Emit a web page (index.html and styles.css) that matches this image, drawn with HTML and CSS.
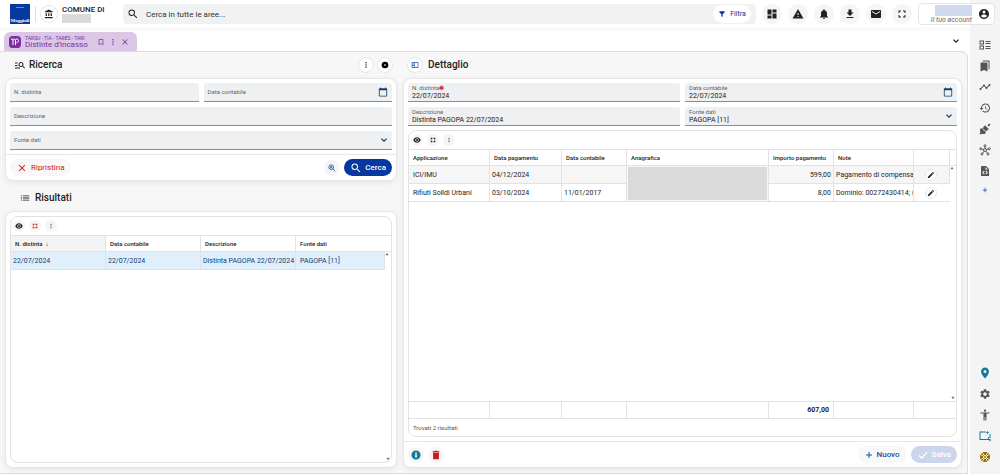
FILE: index.html
```html
<!DOCTYPE html>
<html lang="it">
<head>
  <meta charset="UTF-8">
  <meta name="viewport" content="width=device-width, initial-scale=1.0">
  <title>Distinte d'incasso</title>
  <link rel="stylesheet" href="styles.css">
</head>
<body>
  <!-- Icons -->
  <svg class="sprite" aria-hidden="true">
    <symbol id="i-search" viewBox="0 0 24 24"><path d="M15.5 14h-.79l-.28-.27A6.471 6.471 0 0 0 16 9.5 6.5 6.5 0 1 0 9.5 16c1.61 0 3.09-.59 4.23-1.57l.27.28v.79l5 4.99L20.49 19l-4.99-5zm-6 0C7.01 14 5 11.99 5 9.5S7.01 5 9.5 5 14 7.01 14 9.5 11.99 14 9.5 14z"/></symbol>
    <symbol id="i-zoom" viewBox="0 0 24 24"><g fill="none" stroke="currentColor" stroke-width="2.5"><circle cx="9.500" cy="9.500" r="7"/><path d="M14.500 14.500l7.500 7.500M6 9.500h7M9.500 6v7"/></g></symbol>
    <symbol id="i-more" viewBox="0 0 24 24"><circle cx="12" cy="5" r="2.300"/><circle cx="12" cy="12" r="2.300"/><circle cx="12" cy="19" r="2.300"/></symbol>
    <symbol id="i-bank" viewBox="0 0 24 24"><path d="M4 10v7h3v-7H4zm6 0v7h3v-7h-3zM2 22h19v-3H2v3zm14-12v7h3v-7h-3zm-4.500-9L2 6v2h19V6l-9.500-5z"/></symbol>
    <symbol id="i-dashboard" viewBox="0 0 24 24"><path d="M3 13h8V3H3v10zm0 8h8v-6H3v6zm10 0h8V11h-8v10zm0-18v6h8V3h-8z"/></symbol>
    <symbol id="i-warning" viewBox="0 0 24 24"><path d="M1 21h22L12 2 1 21zm12-3h-2v-2h2v2zm0-4h-2v-4h2v4z"/></symbol>
    <symbol id="i-bell" viewBox="0 0 24 24"><path d="M12 22c1.100 0 2-.9 2-2h-4c0 1.100.89 2 2 2zm6-6v-5c0-3.070-1.640-5.640-4.500-6.320V4c0-.83-.67-1.500-1.500-1.500s-1.500.67-1.500 1.500v.68C7.630 5.360 6 7.920 6 11v5l-2 2v1h16v-1l-2-2z"/></symbol>
    <symbol id="i-download" viewBox="0 0 24 24"><path d="M19 9h-4V3H9v6H5l7 7 7-7zM5 18v2h14v-2H5z"/></symbol>
    <symbol id="i-mail" viewBox="0 0 24 24"><path d="M20 4H4c-1.100 0-2 .9-2 2v12c0 1.100.9 2 2 2h16c1.100 0 2-.9 2-2V6c0-1.100-.9-2-2-2zm0 4l-8 5-8-5V6l8 5 8-5v2z"/></symbol>
    <symbol id="i-full" viewBox="0 0 24 24"><path d="M7 14H5v5h5v-2H7v-3zm-2-4h2V7h3V5H5v5zm12 7h-3v2h5v-5h-2v3zM14 5v2h3v3h2V5h-5z"/></symbol>
    <symbol id="i-corners" viewBox="0 0 24 24"><path d="M3 14h4v3h3v4H3zM3 3h7v4H7v3H3zM17 14h4v7h-7v-4h3zM14 3h7v7h-4V7h-3z"/></symbol>
    <symbol id="i-account" viewBox="0 0 24 24"><path d="M12 2C6.480 2 2 6.480 2 12s4.480 10 10 10 10-4.480 10-10S17.520 2 12 2zm0 3c1.660 0 3 1.340 3 3s-1.340 3-3 3-3-1.340-3-3 1.340-3 3-3zm0 14.200c-2.500 0-4.710-1.280-6-3.220.03-1.990 4-3.080 6-3.080 1.990 0 5.970 1.090 6 3.080-1.290 1.940-3.500 3.220-6 3.220z"/></symbol>
    <symbol id="i-chevron" viewBox="0 0 24 24"><path d="M18.500 6.500L12 13 5.500 6.500 3 9l9 9 9-9z"/></symbol>
    <symbol id="i-filter" viewBox="0 0 24 24"><path d="M4 4h16v3l-6 6v8l-4-2v-6L4 7z"/></symbol>
    <symbol id="i-manage" viewBox="0 0 24 24"><path d="M7 9H2V7h5v2zm0 3H2v2h5v-2zm13.590 7l-3.830-3.830c-.8.52-1.740.83-2.760.83-2.760 0-5-2.240-5-5s2.240-5 5-5 5 2.240 5 5c0 1.020-.31 1.960-.83 2.750L22 17.590 20.590 19zM17 11c0-1.650-1.350-3-3-3s-3 1.350-3 3 1.350 3 3 3 3-1.350 3-3zM2 19h10v-2H2v2z"/></symbol>
    <symbol id="i-list" viewBox="0 0 24 24"><path d="M2 13h3v-2H2v2zm0 5h3v-2H2v2zm0-10h3V6H2v2zm5 5h15v-2H7v2zm0 5h15v-2H7v2zM7 6v2h15V6H7z"/></symbol>
    <symbol id="i-eye" viewBox="0 0 24 24"><path d="M12 3.500C7 3.500 2.730 7.110 1 12c1.730 4.890 6 8.500 11 8.500s9.270-3.610 11-8.500c-1.730-4.890-6-8.500-11-8.500zM12 17c-2.760 0-5-2.240-5-5s2.240-5 5-5 5 2.240 5 5-2.240 5-5 5zm0-8c-1.660 0-3 1.340-3 3s1.340 3 3 3 3-1.340 3-3-1.340-3-3-3z"/></symbol>
    <symbol id="i-close" viewBox="0 0 24 24"><path d="M20 5.600L18.400 4 12 10.400 5.600 4 4 5.600 10.400 12 4 18.400 5.600 20 12 13.600 18.400 20 20 18.400 13.600 12z"/></symbol>
    <symbol id="i-bookmark" viewBox="0 0 24 24"><path d="M17 3H7c-1.100 0-2 .9-2 2v16l7-3 7 3V5c0-1.100-.9-2-2-2zm0 15l-5-2.180L7 18V5h10v13z"/></symbol>
    <symbol id="i-edit" viewBox="0 0 24 24"><path d="M3 17.250V21h3.750L17.810 9.940l-3.750-3.750L3 17.250zM20.710 7.040c.39-.39.39-1.020 0-1.410l-2.340-2.340c-.39-.39-1.020-.39-1.410 0l-1.830 1.830 3.750 3.750 1.830-1.830z"/></symbol>
    <symbol id="i-delete" viewBox="0 0 24 24"><path d="M5 7h14v15H5zM20 3h-4l-1-1H9L8 3H4v3h16V3z"/></symbol>
    <symbol id="i-info" viewBox="0 0 24 24"><path d="M12 1a11 11 0 1 0 0 22 11 11 0 0 0 0-22zm2 17h-4v-8h4v8zm0-9h-4V6h4v3z"/></symbol>
    <symbol id="i-add" viewBox="0 0 24 24"><path d="M21 13.500h-7.500V21h-3v-7.500H3v-3h7.500V3h3v7.500H21z"/></symbol>
    <symbol id="i-check" viewBox="0 0 24 24"><path d="M9 16.170L4.830 12l-1.800 1.800L9 19.800 21.400 7.400l-1.800-1.800z"/></symbol>
    <symbol id="i-calendar" viewBox="0 0 24 24"><path d="M20 3h-1V1h-2v2H7V1H5v2H4c-1.100 0-2 .9-2 2v16c0 1.100.9 2 2 2h16c1.100 0 2-.9 2-2V5c0-1.100-.9-2-2-2zm0 18H4V8h16v13z"/></symbol>
    <symbol id="i-plusdot" viewBox="0 0 24 24"><path d="M12 2a10 10 0 1 0 0 20 10 10 0 0 0 0-20zm0 7l3 3-3 3-3-3z"/></symbol>
    <symbol id="i-panel" viewBox="0 0 24 24"><path d="M2 4v16h20V4H2zm2 2h5v2H4V6zm0 4h5v2H4v-2zm0 4h5v4H4v-4zm7-8h9v12h-9V6z"/></symbol>
    <symbol id="i-tasks" viewBox="0 0 24 24"><path d="M1 3h9v8H1V3zm2 2v4h5V5H3zM1 13h9v8H1v-8zm2 2v4h5v-4H3zM13 4h10v2H13zM13 8h10v2H13zM13 14h10v2H13zM13 18h10v2H13z"/></symbol>
    <symbol id="i-bookmarks" viewBox="0 0 24 24"><path d="M19 18l2 1V3c0-1.100-.9-2-2-2H9C7.900 1 7 1.900 7 3h10c1.100 0 2 .9 2 2v13zM15 5H5c-1.100 0-2 .9-2 2v16l7-3 7 3V7c0-1.100-.9-2-2-2z"/></symbol>
    <symbol id="i-timeline" viewBox="0 0 24 24"><path d="M23 8c0 1.100-.9 2-2 2-.18 0-.35-.02-.51-.07l-3.560 3.550c.05.16.07.34.07.52 0 1.100-.9 2-2 2s-2-.9-2-2c0-.18.02-.36.07-.52l-2.550-2.550c-.16.05-.34.07-.52.07s-.36-.02-.52-.07l-4.550 4.560c.05.16.07.33.07.51 0 1.100-.9 2-2 2s-2-.9-2-2 .9-2 2-2c.18 0 .35.02.51.07l4.560-4.550C8.020 9.360 8 9.180 8 9c0-1.100.9-2 2-2s2 .9 2 2c0 .18-.02.36-.07.52l2.550 2.550c.16-.05.34-.07.52-.07s.36.02.52.07l3.550-3.560C19.020 8.350 19 8.180 19 8c0-1.100.9-2 2-2s2 .9 2 2z"/></symbol>
    <symbol id="i-history" viewBox="0 0 24 24"><path d="M13 3c-4.970 0-9 4.030-9 9H1l3.890 3.890.07.14L9 12H6c0-3.870 3.130-7 7-7s7 3.130 7 7-3.130 7-7 7c-1.930 0-3.680-.79-4.940-2.060l-1.420 1.420C8.270 19.990 10.510 21 13 21c4.970 0 9-4.030 9-9s-4.030-9-9-9zm-1 5v5l4.280 2.540.72-1.210-3.500-2.080V8H12z"/></symbol>
    <symbol id="i-plug" viewBox="0 0 24 24"><path d="M12 4.500l7.500 7.500-2.500 2.500c-1.600 1.600-3.800 1.600-5.200.2l-2.500-2.500c-1.400-1.400-1.400-3.600.2-5.200zM17 4.500L20.500 1 23 3.500 19.500 7zM4.500 10l2 2L8 10.500l1.400 1.400L7.900 13.400l2.700 2.700 1.500-1.500 1.400 1.400-1.500 1.500 2 2-1.500 1.500c-1.700 1.500-4.200 1.600-5.800.4L3 23l-2-2 2-3.200C1.900 16 1.500 13 3 11.500z"/></symbol>
    <symbol id="i-hub" viewBox="0 0 24 24"><g fill="none" stroke="currentColor" stroke-width="2"><circle cx="12" cy="12" r="3"/><circle cx="12" cy="3.500" r="2"/><circle cx="3.500" cy="9.500" r="2"/><circle cx="20.500" cy="9.500" r="2"/><circle cx="6" cy="20" r="2"/><circle cx="18" cy="20" r="2"/><path d="M12 5.500V9M5.500 10l3.500 1M18.500 10L15 11M7.500 18l2.500-3.500M16.500 18L14 14.500"/></g></symbol>
    <symbol id="i-file" viewBox="0 0 24 24"><path fill-rule="evenodd" d="M6 2h8l6 6v14H4V4c0-1 1-2 2-2zm7 2v5h5zM10 11l-4 4 4 4 1.300-1.300L8.600 15l2.700-2.700zm4 0l-1.300 1.300 2.700 2.700-2.700 2.700L14 19l4-4z"/></symbol>
    <symbol id="i-place" viewBox="0 0 24 24"><path d="M12 1C7.600 1 4 4.600 4 9c0 5.500 8 14 8 14s8-8.500 8-14c0-4.400-3.600-8-8-8zm0 11a3 3 0 1 1 0-6 3 3 0 0 1 0 6z"/></symbol>
    <symbol id="i-settings" viewBox="0 0 24 24"><path d="M19.140 12.940c.04-.3.06-.61.06-.94 0-.32-.02-.64-.07-.94l2.030-1.580c.18-.14.23-.41.12-.61l-1.920-3.320c-.12-.22-.37-.29-.59-.22l-2.390.96c-.5-.38-1.030-.7-1.620-.94l-.36-2.540c-.04-.24-.24-.41-.48-.41h-3.840c-.24 0-.43.17-.47.41l-.36 2.540c-.59.24-1.130.57-1.620.94l-2.390-.96c-.22-.08-.47 0-.59.22L2.740 8.870c-.12.21-.08.47.12.61l2.030 1.580c-.05.3-.09.63-.09.94s.02.64.07.94l-2.030 1.580c-.18.14-.23.41-.12.61l1.920 3.320c.12.22.37.29.59.22l2.390-.96c.5.38 1.030.7 1.620.94l.36 2.540c.05.24.24.41.48.41h3.840c.24 0 .44-.17.47-.41l.36-2.540c.59-.24 1.130-.56 1.620-.94l2.390.96c.22.08.47 0 .59-.22l1.920-3.320c.12-.22.07-.47-.12-.61l-2.010-1.580zM12 15.600c-1.980 0-3.600-1.620-3.600-3.600s1.620-3.600 3.600-3.600 3.600 1.620 3.600 3.600-1.620 3.600-3.600 3.600z"/></symbol>
    <symbol id="i-person" viewBox="0 0 24 24"><path d="M12 1a2.300 2.300 0 1 1 0 4.600A2.300 2.300 0 0 1 12 1zm9 8h-6v14h-2.300v-7h-1.400v7H9V9H3V7h18v2z"/></symbol>
    <symbol id="i-screen" viewBox="0 0 24 24"><path d="M1 3h12v2H3v13h15v-4h2v4h3v5l-4-3H1zM17 1l1 3 3 1-3 1-1 3-1-3-3-1 3-1zM21 8h2v8h-2z"/></symbol>
    <symbol id="i-support" viewBox="0 0 24 24"><circle cx="12" cy="12" r="10"/><g fill="none" stroke="#fff6d8" stroke-width="2"><circle cx="12" cy="12" r="3"/><path d="M7.500 4.500L10 8.500M16.500 4.500L14 8.500M7.500 19.500L10 15.500M16.500 19.500L14 15.500M4.500 7.500L8.500 10M19.500 7.500L15.500 10M4.500 16.500L8.500 14M19.500 16.500L15.500 14"/></g></symbol>
    <symbol id="i-up" viewBox="0 0 24 24"><path d="M2 19h20L12 5z"/></symbol>
    <symbol id="i-down" viewBox="0 0 24 24"><path d="M2 5h20L12 19z"/></symbol>
  </svg>

  <header class="topbar">
    <div class="logo"><span class="logo-top">GRUPPO</span><span class="logo-name">Maggioli</span></div>
    <div class="org">
      <span class="round light"><svg class="icon"><use href="#i-bank"/></svg></span>
      <div class="org-text">
        <strong>COMUNE DI</strong>
        <span class="mask"></span>
      </div>
    </div>
    <div class="search">
      <svg class="icon big"><use href="#i-search"/></svg>
      <input type="text" aria-label="Cerca" placeholder="Cerca in tutte le aree...">
      <button type="button" class="filter-button"><svg class="icon small"><use href="#i-filter"/></svg>Filtra</button>
    </div>
    <nav class="top-actions">
      <button type="button" class="round" aria-label="Dashboard"><svg class="icon big"><use href="#i-dashboard"/></svg></button>
      <button type="button" class="round" aria-label="Avvisi"><svg class="icon big"><use href="#i-warning"/></svg></button>
      <button type="button" class="round" aria-label="Notifiche"><svg class="icon big"><use href="#i-bell"/></svg></button>
      <button type="button" class="round" aria-label="Download"><svg class="icon big"><use href="#i-download"/></svg></button>
      <button type="button" class="round" aria-label="Messaggi"><svg class="icon big"><use href="#i-mail"/></svg></button>
      <button type="button" class="round" aria-label="Schermo intero"><svg class="icon big"><use href="#i-full"/></svg></button>
    </nav>
    <button type="button" class="account">
      <span class="account-text"><span class="mask blue"></span><em>Il tuo account</em></span>
      <svg class="icon big"><use href="#i-account"/></svg>
    </button>
  </header>

  <div class="layout">
    <main class="main">
      <div class="tabs">
        <div class="tab">
          <svg class="tab-logo" viewBox="0 0 24 24"><rect width="24" height="24" rx="7" fill="#7b2fa0"/><path d="M4 7c3-3 4 0 4 2v9M8 9c0-4 5-4 5 0v9M13 9c0-4 6-4 6 0 0 3-2 4-4 4" fill="none" stroke="#fff" stroke-width="2"/></svg>
          <div class="tab-text"><span>TARSU - TIA - TARES - TARI</span><strong>Distinte d'incasso</strong></div>
          <button type="button" aria-label="Segnalibro"><svg class="icon small"><use href="#i-bookmark"/></svg></button>
          <button type="button" aria-label="Altro"><svg class="icon small"><use href="#i-more"/></svg></button>
          <button type="button" aria-label="Chiudi"><svg class="icon small"><use href="#i-close"/></svg></button>
        </div>
        <button type="button" class="tabs-toggle" aria-label="Espandi"><svg class="icon small"><use href="#i-chevron"/></svg></button>
      </div>

      <div class="workspace">
        <!-- Search and results -->
        <section class="column">
          <div class="heading first">
            <svg class="icon big"><use href="#i-manage"/></svg>
            <h2>Ricerca</h2>
            <button type="button" class="round mini light" aria-label="Altro"><svg class="icon small"><use href="#i-more"/></svg></button>
            <button type="button" class="round mini light dark" aria-label="Comprimi"><svg class="icon small"><use href="#i-plusdot"/></svg></button>
          </div>
          <form class="card">
            <div class="fields">
              <div class="field"><label for="s-num">N. distinta</label><input id="s-num" type="text"></div>
              <div class="field"><label for="s-data">Data contabile</label><input id="s-data" type="text"><svg class="icon"><use href="#i-calendar"/></svg></div>
              <div class="field span"><label for="s-desc">Descrizione</label><input id="s-desc" type="text"></div>
              <div class="field span"><label for="s-fonte">Fonte dati</label><select id="s-fonte"><option></option></select><svg class="icon small"><use href="#i-chevron"/></svg></div>
            </div>
            <div class="actions">
              <button type="reset" class="btn danger"><svg class="icon"><use href="#i-close"/></svg>Ripristina</button>
              <span class="spacer"></span>
              <button type="button" class="round mini blue-icon" aria-label="Ricerca avanzata"><svg class="icon small"><use href="#i-zoom"/></svg></button>
              <button type="button" class="btn primary"><svg class="icon big"><use href="#i-search"/></svg>Cerca</button>
            </div>
          </form>

          <div class="heading second">
            <svg class="icon"><use href="#i-list"/></svg>
            <h2>Risultati</h2>
          </div>
          <div class="card grow">
            <div class="grid-box">
              <div class="tools">
                <button type="button" class="round tiny" aria-label="Mostra"><svg class="icon small"><use href="#i-eye"/></svg></button>
                <button type="button" class="round tiny red" aria-label="Espandi"><svg class="icon tiny-icon"><use href="#i-corners"/></svg></button>
                <button type="button" class="round tiny" aria-label="Altro"><svg class="icon tiny-icon"><use href="#i-more"/></svg></button>
              </div>
              <table class="results">
                <colgroup><col class="c-quarter"><col class="c-quarter"><col class="c-quarter"><col><col class="c-scroll"></colgroup>
                <thead>
                  <tr><th class="sorted">N. distinta &nbsp;↓</th><th>Data contabile</th><th>Descrizione</th><th colspan="2">Fonte dati</th></tr>
                </thead>
                <tbody>
                  <tr class="selected"><td>22/07/2024</td><td>22/07/2024</td><td>Distinta PAGOPA 22/07/2024</td><td class="roomy">PAGOPA [11]</td><td class="gutter"><svg class="arrow"><use href="#i-up"/></svg></td></tr>
                </tbody>
              </table>
              <svg class="arrow end"><use href="#i-down"/></svg>
            </div>
          </div>
        </section>

        <!-- Detail -->
        <section class="column">
          <div class="heading detail">
            <button type="button" class="round mini light blue-icon" aria-label="Pannello"><svg class="icon small"><use href="#i-panel"/></svg></button>
            <h2>Dettaglio</h2>
          </div>
          <form class="card grow">
            <div class="fields">
              <div class="field filled"><label for="d-num">N. distinta<b class="req">✱</b></label><input id="d-num" type="text" value="22/07/2024"></div>
              <div class="field filled"><label for="d-data">Data contabile</label><input id="d-data" type="text" value="22/07/2024"><svg class="icon"><use href="#i-calendar"/></svg></div>
              <div class="field filled"><label for="d-desc">Descrizione</label><input id="d-desc" type="text" value="Distinta PAGOPA 22/07/2024"></div>
              <div class="field filled"><label for="d-fonte">Fonte dati</label><select id="d-fonte"><option>PAGOPA [11]</option></select><svg class="icon small"><use href="#i-chevron"/></svg></div>
            </div>
            <div class="grid-box">
              <div class="tools">
                <button type="button" class="round tiny" aria-label="Mostra"><svg class="icon small"><use href="#i-eye"/></svg></button>
                <button type="button" class="round tiny" aria-label="Espandi"><svg class="icon tiny-icon"><use href="#i-corners"/></svg></button>
                <button type="button" class="round tiny" aria-label="Altro"><svg class="icon tiny-icon"><use href="#i-more"/></svg></button>
              </div>
              <table class="payments">
                <colgroup><col class="c-app"><col class="c-pay"><col class="c-acc"><col><col class="c-amount"><col class="c-note"><col class="c-edit"><col class="c-scroll"></colgroup>
                <thead>
                  <tr><th>Applicazione</th><th>Data pagamento</th><th>Data contabile</th><th>Anagrafica</th><th>Importo pagamento</th><th>Note</th><th></th><th></th></tr>
                </thead>
                <tbody>
                  <tr class="odd"><td class="roomy">ICI/IMU</td><td>04/12/2024</td><td></td><td class="masked" rowspan="2"><span class="mask"></span></td><td class="num">599,00</td><td>Pagamento di compensa</td><td class="edit"><button type="button" class="round tiny light" aria-label="Modifica"><svg class="icon small"><use href="#i-edit"/></svg></button></td><td class="gutter" rowspan="2"><svg class="arrow"><use href="#i-up"/></svg></td></tr>
                  <tr><td class="roomy">Rifiuti Solidi Urbani</td><td>03/10/2024</td><td>11/01/2017</td><td class="num">8,00</td><td>Dominio: 00272430414; (</td><td class="edit"><button type="button" class="round tiny light" aria-label="Modifica"><svg class="icon small"><use href="#i-edit"/></svg></button></td></tr>
                </tbody>
              </table>
              <svg class="arrow end"><use href="#i-down"/></svg>
              <table class="totals">
                <colgroup><col class="c-app"><col class="c-pay"><col class="c-acc"><col><col class="c-amount"><col class="c-note"><col class="c-rest"></colgroup>
                <tbody><tr><td></td><td></td><td></td><td></td><td class="num">607,00</td><td></td><td></td></tr></tbody>
              </table>
              <div class="count">Trovati 2 risultati</div>
            </div>
            <div class="actions">
              <button type="button" class="round mini teal" aria-label="Informazioni"><svg class="icon"><use href="#i-info"/></svg></button>
              <button type="button" class="round mini red" aria-label="Elimina"><svg class="icon"><use href="#i-delete"/></svg></button>
              <span class="spacer"></span>
              <button type="button" class="btn plain"><svg class="icon small"><use href="#i-add"/></svg>Nuovo</button>
              <button type="button" class="btn primary" disabled><svg class="icon big"><use href="#i-check"/></svg>Salva</button>
            </div>
          </form>
        </section>
      </div>
    </main>

    <aside class="sidebar">
      <button type="button" aria-label="Attività"><svg class="icon big"><use href="#i-tasks"/></svg></button>
      <button type="button" aria-label="Segnalibri"><svg class="icon big"><use href="#i-bookmarks"/></svg></button>
      <button type="button" aria-label="Andamento"><svg class="icon big"><use href="#i-timeline"/></svg></button>
      <button type="button" aria-label="Cronologia"><svg class="icon big"><use href="#i-history"/></svg></button>
      <button type="button" aria-label="Connessioni"><svg class="icon big"><use href="#i-plug"/></svg></button>
      <button type="button" aria-label="Rete"><svg class="icon big"><use href="#i-hub"/></svg></button>
      <button type="button" aria-label="Documenti"><svg class="icon big"><use href="#i-file"/></svg></button>
      <button type="button" class="add" aria-label="Aggiungi"><svg class="icon tiny-icon"><use href="#i-add"/></svg></button>
      <span class="spacer"></span>
      <button type="button" class="teal" aria-label="Mappa"><svg class="icon big"><use href="#i-place"/></svg></button>
      <button type="button" aria-label="Impostazioni"><svg class="icon big"><use href="#i-settings"/></svg></button>
      <button type="button" aria-label="Accessibilità"><svg class="icon big"><use href="#i-person"/></svg></button>
      <button type="button" class="teal" aria-label="Schermo"><svg class="icon big"><use href="#i-screen"/></svg></button>
      <button type="button" class="gold" aria-label="Assistenza"><svg class="icon big"><use href="#i-support"/></svg></button>
    </aside>
  </div>
</body>
</html>
```
FILE: styles.css
```css
* {
  box-sizing: border-box;
}
body {
  display: flex;
  flex-direction: column;
  height: 100vh;
  margin: 0;
  font-family: Roboto, Arial, sans-serif;
  font-size: 7px;
  line-height: 8px;
  color: #222;
  background-color: #fff;
  overflow: hidden;
}
button, input, select {
  font: inherit;
  color: inherit;
  margin: 0;
  padding: 0;
  border: none;
  background: none;
}
input, select {
  min-width: 0;
  width: 100%;
  outline: none;
  appearance: none;
}
button {
  display: flex;
  align-items: center;
  justify-content: center;
  white-space: nowrap;
  cursor: pointer;
}
.sprite {
  display: none;
}
.icon {
  width: 10px;
  height: 10px;
  flex: none;
  fill: currentColor;
}
.icon.small {
  width: 8px;
  height: 8px;
}
.icon.big {
  width: 12px;
  height: 12px;
}
.icon.tiny-icon {
  width: 6px;
  height: 6px;
}
.spacer {
  flex: 1;
}
.mask {
  display: block;
  background-color: #dadada;
}
.round {
  display: flex;
  align-items: center;
  justify-content: center;
  flex: none;
  width: 20px;
  height: 20px;
  border-radius: 50%;
  background-color: #f5f5f5;
}
.round.mini {
  width: 16px;
  height: 16px;
}
.round.tiny {
  width: 12px;
  height: 12px;
}
.round.light {
  background-color: #fff;
  border: 1px solid #e6e6e6;
}
.round.dark {
  color: #000;
}
.red {
  color: #c9191e;
}
.teal {
  color: #14799b;
}
.blue-icon {
  color: #1650a5;
}

/* Top bar */
.topbar {
  display: flex;
  align-items: center;
  flex: none;
  height: 28px;
  padding: 0 5px 0 10px;
  background: linear-gradient(to left, #f4f4f4 30px, #fff 30px);
}
.logo {
  display: flex;
  flex-direction: column;
  justify-content: space-between;
  align-items: center;
  width: 20px;
  height: 20px;
  background-color: #0638a0;
  color: #fff;
  overflow: hidden;
}
.logo-top {
  font-size: 2px;
  line-height: 6px;
}
.logo-name {
  font-family: "Liberation Serif", serif;
  font-size: 5px;
  line-height: 6px;
  font-weight: 700;
}
.org {
  display: flex;
  align-items: center;
  gap: 4px;
  width: 88px;
  height: 16px;
  margin-left: 5px;
  padding-left: 4px;
  border-left: 1px solid #ddd;
}
.org .round {
  width: 18px;
  height: 18px;
}
.org strong {
  display: block;
  font-size: 8px;
  font-weight: 500;
  white-space: nowrap;
}
.org .mask {
  width: 29px;
  height: 9px;
}
.search {
  display: flex;
  align-items: center;
  flex: 1;
  gap: 7px;
  height: 20px;
  padding: 0 5px 0 4px;
  border-radius: 4px;
  background-color: #f0f1f2;
}
.search input {
  flex: 1;
  font-size: 8px;
}
.search input::placeholder {
  color: #333;
  opacity: 1;
}
.filter-button {
  gap: 4px;
  width: 38px;
  height: 18px;
  border-radius: 9px;
  background-color: #fff;
  color: #0638a0;
}
.top-actions {
  display: flex;
  gap: 6px;
  padding: 0 6px;
}
.account {
  justify-content: flex-end;
  gap: 6px;
  width: 77px;
  height: 22px;
  padding-right: 4px;
  border: 1px solid #e4e4e4;
  border-radius: 4px;
  background-color: #fff;
}
.account-text {
  display: flex;
  flex-direction: column;
  align-items: flex-end;
  color: #666;
}
.mask.blue {
  width: 37px;
  height: 11px;
  background-color: #d0daec;
}

/* Tabs */
.layout {
  display: flex;
  flex: 1;
  min-height: 0;
}
.main {
  display: flex;
  flex-direction: column;
  flex: 1;
  min-width: 0;
  padding-right: 2px;
  background: linear-gradient(#f8f8f8, #fff 5px);
}
.tabs {
  display: flex;
  align-items: flex-end;
  justify-content: space-between;
  flex: none;
  height: 23px;
  padding: 0 7px 0 4px;
}
.tab {
  display: flex;
  align-items: center;
  gap: 4px;
  height: 19px;
  padding: 0 8px 0 5px;
  border-radius: 6px 6px 0 0;
  background-color: #dbc6e6;
  color: #7b2fa0;
}
.tab-logo {
  width: 12px;
  height: 12px;
}
.tab-text {
  display: flex;
  flex-direction: column;
  width: 68px;
  white-space: nowrap;
}
.tab-text span {
  font-size: 5px;
  line-height: 6px;
}
.tab-text strong {
  font-size: 8px;
  font-weight: 400;
}
.tabs-toggle {
  height: 20px;
  width: 10px;
}

/* Workspace */
.workspace {
  display: grid;
  grid-template-columns: 392fr 559fr;
  gap: 6px;
  flex: 1;
  min-height: 0;
  padding: 0 5px 5px;
  border: solid #e2d6ea;
  border-width: 1px 1px 1px 0;
  border-radius: 0 7px 0 0;
  background-color: #f7f7f7;
}
.column {
  display: flex;
  flex-direction: column;
  min-width: 0;
  min-height: 0;
}
.heading {
  display: flex;
  align-items: center;
  flex: none;
  gap: 3px;
  height: 26px;
  padding: 0 4px;
}
.heading h2 {
  flex: 1;
  margin: 0;
  font-size: 10px;
  line-height: 12px;
  font-weight: 500;
}
.heading.first {
  padding-left: 9px;
}
.heading.second {
  height: 30px;
  gap: 5px;
  padding: 4px 15px 0;
}
.heading.detail {
  gap: 5px;
}
.card {
  display: flex;
  flex-direction: column;
  flex: none;
  border: 1px solid #e6e6e6;
  border-radius: 8px;
  background-color: #fff;
  box-shadow: 0 2px 6px #00000012;
}
.card.grow {
  flex: 1;
  min-height: 0;
}
.fields {
  display: grid;
  grid-template-columns: 1fr 1fr;
  gap: 5px;
  padding: 4px;
}
.field {
  display: grid;
  grid-template-columns: 1fr auto;
  align-items: center;
  height: 19px;
  padding: 0 4px;
  border-bottom: 1px solid #8b8e91;
  border-radius: 3px 3px 0 0;
  background-color: #eef0f1;
}
.field.span {
  grid-column: span 2;
}
.field label, .field input, .field select {
  grid-area: 1 / 1;
}
.field label {
  font-size: 6px;
  line-height: 8px;
  color: #666;
}
.field .icon {
  grid-area: 1 / 2;
  color: #12406f;
}
.field.filled label {
  align-self: start;
  padding-top: 1px;
}
.field.filled input, .field.filled select {
  align-self: end;
  height: 10px;
}
.req {
  color: #d32f2f;
}
.actions {
  display: flex;
  align-items: center;
  flex: none;
  gap: 4px;
  height: 26px;
  padding: 0 4px;
  border-top: 1px solid #e6e6e6;
}
.btn {
  gap: 4px;
  height: 17px;
  padding: 0 7px;
  border-radius: 9px;
  font-size: 8px;
  font-weight: 500;
  background-color: #f8f8f8;
}
.btn.danger {
  color: #c9191e;
  font-weight: 400;
}
.btn.plain {
  color: #1650a5;
}
.btn.primary {
  gap: 3px;
  padding: 0 6px;
  background-color: #0638a0;
  color: #fff;
}
.btn.primary:disabled {
  background-color: #cbd6ec;
}

/* Tables */
.grid-box {
  display: flex;
  flex-direction: column;
  flex: 1;
  min-height: 0;
  margin: 0 4px 4px;
  border: 1px solid #e2e2e2;
  border-radius: 8px;
  overflow: hidden;
}
.column:first-child .grid-box {
  margin-top: 4px;
}
.tools {
  display: flex;
  align-items: center;
  flex: none;
  gap: 4px;
  height: 18px;
  padding: 0 2px;
}
table {
  width: 100%;
  table-layout: fixed;
  border-collapse: separate;
  border-spacing: 0;
}
th, td {
  height: 18px;
  padding: 0 2px;
  border-right: 1px solid #e2e2e2;
  border-bottom: 1px solid #e2e2e2;
  text-align: left;
  white-space: nowrap;
  overflow: hidden;
}
th {
  height: 17px;
  padding: 0 4px;
  border-top: 1px solid #e2e2e2;
  font-size: 6px;
  font-weight: 500;
}
tr > :last-child {
  border-right: none;
}
td.roomy {
  padding-left: 4px;
}
.c-quarter {
  width: 25%;
}
.c-scroll {
  width: 6px;
}
.c-app {
  width: 81px;
}
.c-pay {
  width: 72px;
}
.c-acc {
  width: 65px;
}
.c-amount {
  width: 65px;
}
.c-note {
  width: 80px;
}
.c-edit {
  width: 36px;
}
.c-rest {
  width: 42px;
}
.sorted {
  background-color: #f3f3f3;
}
.selected td {
  background-color: #e0effc;
  color: #12406f;
}
.odd td {
  background-color: #f6f6f6;
}
.num {
  text-align: right;
}
td.edit {
  padding: 0 11px;
}
td.masked {
  padding: 0 1px;
}
.masked .mask {
  height: 33px;
}
tr td.gutter {
  padding: 0;
  border: none;
  background-color: #fff;
  vertical-align: top;
}
.arrow {
  display: block;
  width: 4px;
  height: 4px;
  fill: #777;
}
.arrow.end {
  flex: none;
  align-self: flex-end;
  margin: auto 1px 1px 0;
}
.totals td {
  border-top: 1px solid #e2e2e2;
  font-weight: 700;
}
.totals td.num {
  padding-right: 4px;
}
.count {
  flex: none;
  height: 17px;
  padding: 0 4px;
  font-size: 6px;
  line-height: 17px;
  color: #555;
}

/* Sidebar */
.sidebar {
  display: flex;
  flex-direction: column;
  flex: none;
  width: 30px;
  padding: 6px 0 7px;
  background-color: #f4f4f4;
  color: #555;
}
.sidebar button {
  flex: none;
  height: 21px;
}
.sidebar .add {
  height: 17px;
  color: #1650a5;
}
.sidebar .teal {
  color: #14799b;
}
.sidebar .gold {
  color: #8a6a05;
}
.gold .icon {
  border-radius: 50%;
  background-color: #fff6d8;
}
```
